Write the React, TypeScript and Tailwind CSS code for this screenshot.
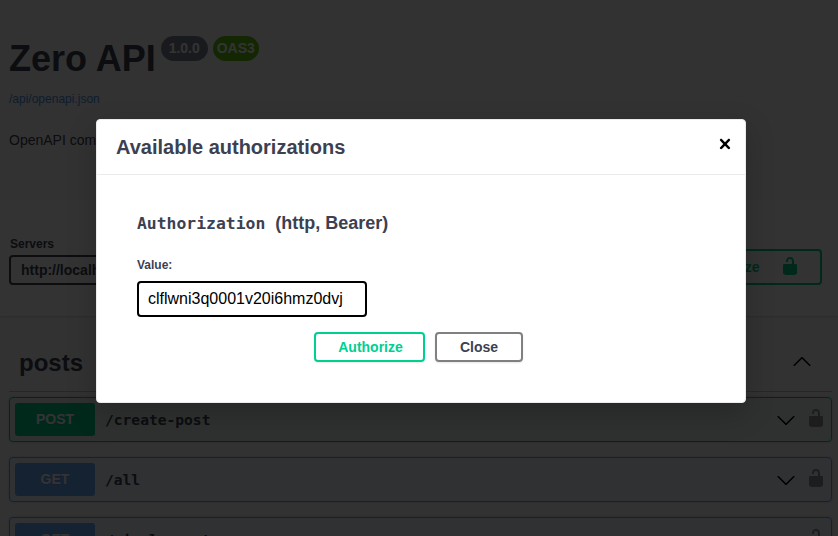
import React from "react";

const MONO = "font-['DejaVu_Sans_Mono',monospace]";

function Unlocked({ className }: { className: string }) {
  return (
    <svg viewBox="0 0 20 20" width="20" height="20" className={className}>
      <path d="M15.8 8H14V5.6C14 2.703 12.665 1 10 1 7.334 1 6 2.703 6 5.6V6h2v-.801C8 3.754 8.797 3 10 3c1.203 0 2 .754 2 2.199V8H4c-.553 0-1 .646-1 1.199V17c0 .549.428 1.139.951 1.307l1.197.387C5.672 18.861 6.55 19 7.1 19h5.8c.549 0 1.428-.139 1.951-.307l1.196-.387c.524-.167.953-.757.953-1.306V9.199C17 8.646 16.352 8 15.8 8z" />
    </svg>
  );
}

function Arrow({ up = false }: { up?: boolean }) {
  return (
    <svg viewBox="0 0 20 20" width="20" height="20" className={up ? "mb-px rotate-180" : ""}>
      <path d="M17.418 6.109c.272-.268.709-.268.979 0s.271.701 0 .969l-7.908 7.83c-.27.268-.707.268-.979 0l-7.908-7.83c-.27-.268-.27-.701 0-.969.271-.268.709-.268.979 0L10 13.25l7.418-7.141z" />
    </svg>
  );
}

function Operation({ method, path }: { method: "POST" | "GET"; path: string }) {
  const post = method === "POST";
  return (
    <div
      className={
        "mb-[15px] flex h-[45px] shrink-0 items-center rounded border px-[5px] shadow-[0_0_3px_rgba(0,0,0,.19)] " +
        (post ? "border-[#00cc88] bg-[#49cc90]/10" : "border-[#61a5fe] bg-[#61affe]/10")
      }
    >
      <span
        className={
          "flex h-[33px] w-20 items-center justify-center rounded-[3px] pb-0.5 text-sm font-bold text-white [text-shadow:0_1px_0_rgba(0,0,0,.1)] " +
          (post ? "bg-[#00cc88]" : "bg-[#69a8fb]")
        }
      >
        {method}
      </span>
      <span className={"ml-[10px] flex-1 text-[14.6px] font-bold leading-5 " + MONO}>{path}</span>
      <Arrow />
      <Unlocked className="mb-1 ml-[10px] opacity-40" />
    </div>
  );
}

export default function App() {
  return (
    <div className="relative h-[536px] w-[838px] overflow-hidden bg-[#fafafa] font-['Liberation_Sans',Arial,sans-serif] text-[#3b4151]">
      <div className="flex h-full flex-col">
        <header className="h-[200px] shrink-0 px-[9px] pt-9">
          <div className="flex items-start">
            <h1 className="mt-px text-[36px] font-bold leading-[44px]">Zero API</h1>
            <span className="ml-[5px] flex h-[25px] w-[47px] items-center justify-center rounded-full bg-[#7d8492] pb-px text-sm font-bold text-white">1.0.0</span>
            <span className="ml-[5px] flex h-[25px] w-[46px] items-center justify-center rounded-full bg-[#62c010] pb-px text-sm font-bold text-white">OAS3</span>
          </div>
          <a className="mt-[10px] block text-xs leading-4 text-[#4990e2]">/api/openapi.json</a>
          <p className="mt-[23px] text-sm leading-5">OpenAPI compliant REST API</p>
        </header>
        <section className="flex h-[116px] shrink-0 justify-between bg-white px-[9px] shadow-[0_1px_2px_rgba(0,0,0,.15)]">
          <div className="pt-9">
            <div className="pl-px text-xs font-bold leading-4">Servers</div>
            <div className="mt-[3px] flex h-[30px] w-[240px] items-center rounded border-2 border-[#41444e] px-[10px] text-sm font-bold">http://localhost:3000/api</div>
          </div>
          <div className="mr-[7px] mt-[49px] flex h-9 w-[142px] items-center justify-between rounded border-2 border-[#00cc88] pl-[13px] pr-5 text-sm font-bold text-[#00cc88]">
            Authorize
            <Unlocked className="mb-0.5 fill-[#00cc88]" />
          </div>
        </section>
        <main className="flex min-h-0 flex-1 flex-col pl-[9px] pr-[6px] pt-[18px]">
          <div className="mb-[5px] flex h-[58px] shrink-0 items-center justify-between border-b border-[#3b4151]/30 pl-[10px] pr-5">
            <h2 className="text-2xl font-bold">posts</h2>
            <Arrow up />
          </div>
          <Operation method="POST" path="/create-post" />
          <Operation method="GET" path="/all" />
          <Operation method="GET" path="/single-post" />
        </main>
      </div>
      <div className="absolute inset-0 flex items-start justify-center bg-black/80 pt-[119px]">
        <div className="ml-1 flex h-[284px] w-[650px] flex-col rounded border border-[#ebebeb] bg-white shadow-[0_10px_30px_rgba(0,0,0,.2)]">
          <div className="flex h-[55px] shrink-0 items-center justify-between border-b border-[#ebebeb] pl-[19px] pr-[9px]">
            <h3 className="text-xl font-bold">Available authorizations</h3>
            <svg viewBox="0 0 20 20" width="22" height="20" preserveAspectRatio="none" className="mb-[7px]">
              <path d="M14.348 14.849c-.469.469-1.229.469-1.697 0L10 11.819l-2.651 3.029c-.469.469-1.229.469-1.697 0-.469-.469-.469-1.229 0-1.697l2.758-3.15-2.759-3.152c-.469-.469-.469-1.228 0-1.697.469-.469 1.228-.469 1.697 0L10 8.183l2.651-3.031c.469-.469 1.228-.469 1.697 0 .469.469.469 1.229 0 1.697l-2.758 3.152 2.758 3.15c.469.469.469 1.229 0 1.698z" />
            </svg>
          </div>
          <div className="px-10 pt-9">
            <h4 className="flex items-baseline text-lg font-bold leading-6">
              <code className={"mr-[10px] text-[16.4px] " + MONO}>Authorization</code>
              (http, Bearer)
            </h4>
            <div className="mt-[21px] text-xs font-bold leading-4">Value:</div>
            <div className="mt-2 flex h-9 w-[230px] items-center rounded border-2 border-black px-[9px] text-base text-black">clflwni3q0001v20i6hmz0dvj</div>
            <div className="mr-1.5 mt-[15px] flex justify-center gap-[10px] text-sm font-bold">
              <div className="flex h-[30px] w-[111px] items-center justify-center rounded border-2 border-[#00cf92] pl-[3px] text-[#00cf92] shadow-[0_1px_2px_rgba(0,0,0,.1)]">Authorize</div>
              <div className="flex h-[30px] w-[88px] items-center justify-center rounded border-2 border-[#808080] pl-px shadow-[0_1px_2px_rgba(0,0,0,.1)]">Close</div>
            </div>
          </div>
        </div>
      </div>
    </div>
  );
}
